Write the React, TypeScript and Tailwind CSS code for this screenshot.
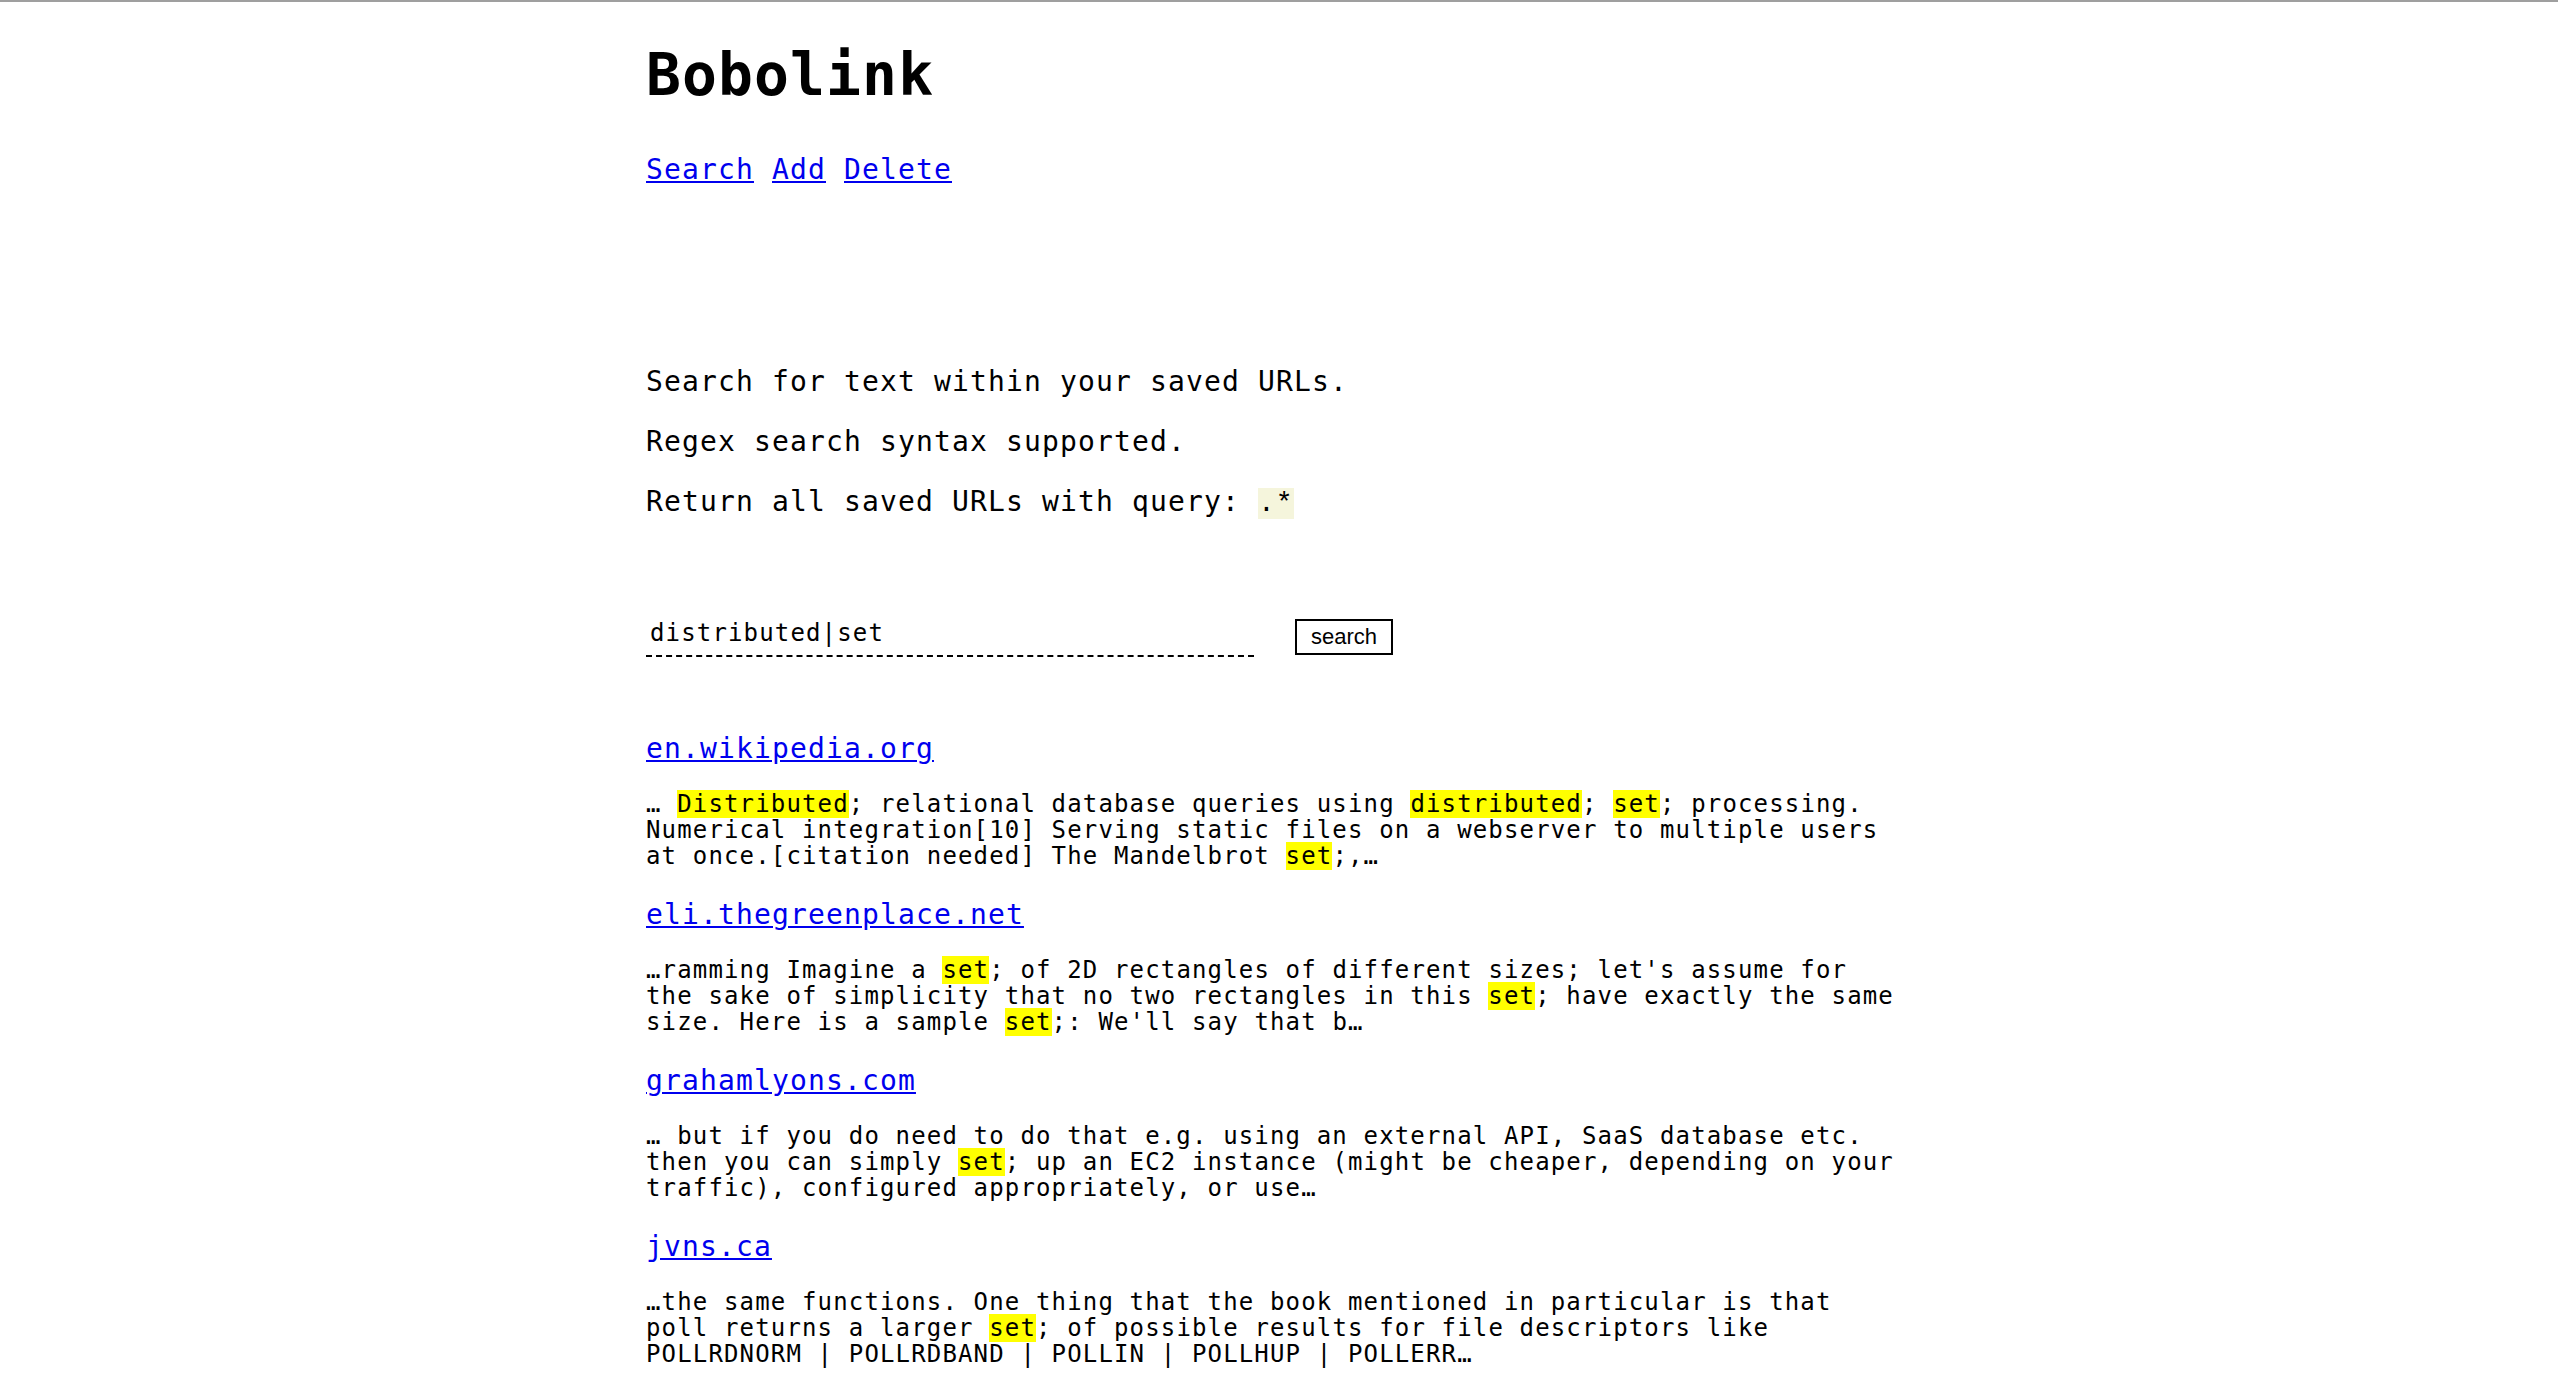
import React from "react";

type Seg = string | { m: string };

const results: { host: string; snippet: Seg[] }[] = [
  {
    host: "en.wikipedia.org",
    snippet: [
      "… ",
      { m: "Distributed" },
      "; relational database queries using ",
      { m: "distributed" },
      "; ",
      { m: "set" },
      "; processing. Numerical integration[10] Serving static files on a webserver to multiple users at once.[citation needed] The Mandelbrot ",
      { m: "set" },
      ";,…",
    ],
  },
  {
    host: "eli.thegreenplace.net",
    snippet: [
      "…ramming Imagine a ",
      { m: "set" },
      "; of 2D rectangles of different sizes; let's assume for the sake of simplicity that no two rectangles in this ",
      { m: "set" },
      "; have exactly the same size. Here is a sample ",
      { m: "set" },
      ";: We'll say that b…",
    ],
  },
  {
    host: "grahamlyons.com",
    snippet: [
      "… but if you do need to do that e.g. using an external API, SaaS database etc. then you can simply ",
      { m: "set" },
      "; up an EC2 instance (might be cheaper, depending on your traffic), configured appropriately, or use…",
    ],
  },
  {
    host: "jvns.ca",
    snippet: [
      "…the same functions. One thing that the book mentioned in particular is that poll returns a larger ",
      { m: "set" },
      "; of possible results for file descriptors like POLLRDNORM | POLLRDBAND | POLLIN | POLLHUP | POLLERR…",
    ],
  },
];

export default function App() {
  return (
    <div className="min-h-screen bg-white border-t-2 border-[#9f9f9f] font-['DejaVu_Sans_Mono',monospace] text-black">
      <div className="mx-auto w-[1266px] pt-[44px] pb-10">
        {/* Title */}
        <h1 className="text-[58px] leading-[58px] font-bold tracking-[1.1px]">Bobolink</h1>

        {/* Nav */}
        <nav className="mt-[51px] text-[28px] leading-[30px] tracking-[1.14px]">
          <a href="#" className="text-[#0000ee] underline">
            Search
          </a>{" "}
          <a href="#" className="text-[#0000ee] underline">
            Add
          </a>{" "}
          <a href="#" className="text-[#0000ee] underline">
            Delete
          </a>
        </nav>

        {/* Intro */}
        <div className="mt-[182px] flex flex-col gap-[30px] text-[28px] leading-[30px] tracking-[1.14px]">
          <p>Search for text within your saved URLs.</p>
          <p>Regex search syntax supported.</p>
          <p>
            Return all saved URLs with query: <code className="bg-[#f5f5dc] inline-block leading-[31px]">.*</code>
          </p>
        </div>

        {/* Search form */}
        <form className="mt-[100px] flex items-start gap-[41px]" onSubmit={(e) => e.preventDefault()}>
          <input
            type="text"
            defaultValue="distributed|set"
            className="mt-[2px] w-[608px] h-[36px] pl-[4px] pt-0 pb-[10px] border-0 border-b-2 border-dashed border-black outline-none bg-transparent text-[24px] leading-[26px] tracking-[1.15px] font-['DejaVu_Sans_Mono',monospace]"
          />
          <button
            type="submit"
            className="w-[98px] h-[36px] border-2 border-black bg-white text-[22px] leading-[28px] font-['Liberation_Sans',Arial,sans-serif]"
          >
            search
          </button>
        </form>

        {/* Results */}
        <div className="mt-[77px]">
          {results.map((r) => (
            <div key={r.host} className="mb-[31px]">
              <div className="text-[28px] leading-[30px] tracking-[1.14px]">
                <a href="#" className="text-[#0000ee] underline">
                  {r.host}
                </a>
              </div>
              <p className="mt-[27px] w-[1256px] text-[24px] leading-[26px] tracking-[1.15px]">
                {r.snippet.map((s, i) =>
                  typeof s === "string" ? (
                    <span key={i}>{s}</span>
                  ) : (
                    <mark key={i} className="bg-[#ffff00] text-black">
                      {s.m}
                    </mark>
                  )
                )}
              </p>
            </div>
          ))}
        </div>
      </div>
    </div>
  );
}
